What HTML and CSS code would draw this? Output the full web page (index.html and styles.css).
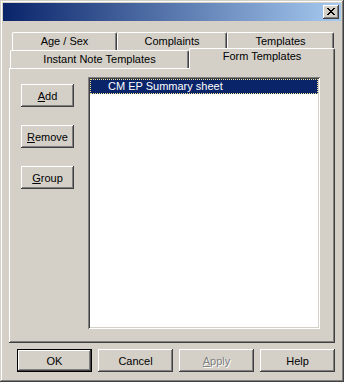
FILE: index.html
```html
<!DOCTYPE html>
<html>
<head>
<meta charset="utf-8">
<link rel="stylesheet" href="styles.css">
</head>
<body>
<div class="window">
  <div class="titlebar">
    <div class="close">
      <svg width="8" height="7" viewBox="0 0 8 7" shape-rendering="crispEdges">
        <g fill="#000">
          <rect x="0" y="0" width="2" height="1"/><rect x="6" y="0" width="2" height="1"/>
          <rect x="1" y="1" width="2" height="1"/><rect x="5" y="1" width="2" height="1"/>
          <rect x="2" y="2" width="4" height="1"/>
          <rect x="3" y="3" width="2" height="1"/>
          <rect x="2" y="4" width="4" height="1"/>
          <rect x="1" y="5" width="2" height="1"/><rect x="5" y="5" width="2" height="1"/>
          <rect x="0" y="6" width="2" height="1"/><rect x="6" y="6" width="2" height="1"/>
        </g>
      </svg>
    </div>
  </div>
  <div class="body">
    <div class="tabstrip">
      <div class="tabrow row1">
        <div class="tab t-age">Age / Sex</div>
        <div class="tab t-comp">Complaints</div>
        <div class="tab t-tmpl">Templates</div>
      </div>
      <div class="tabrow row2">
        <div class="tab t-inst">Instant Note Templates</div>
        <div class="tab t-form active">Form Templates</div>
      </div>
    </div>
    <div class="panel">
      <div class="side">
        <button class="btn small"><u>A</u>dd</button>
        <button class="btn small"><u>R</u>emove</button>
        <button class="btn small"><u>G</u>roup</button>
      </div>
      <div class="list">
        <div class="item selected">CM EP Summary sheet</div>
      </div>
    </div>
    <div class="actions">
      <button class="btn wide default">OK</button>
      <button class="btn wide">Cancel</button>
      <button class="btn wide disabled"><u>A</u>pply</button>
      <button class="btn wide">Help</button>
    </div>
  </div>
</div>
</body>
</html>
```
FILE: styles.css
```css
html, body {
  margin: 0;
  padding: 0;
  background: #d4d0c8;
}
body {
  font-family: "Liberation Sans", Arial, sans-serif;
  font-size: 11px;
  color: #000;
}
.window {
  width: 344px;
  height: 382px;
  box-sizing: border-box;
  padding: 3px;
  background: #d4d0c8;
  box-shadow: inset -1px -1px #404040, inset 1px 1px #d4d0c8, inset -2px -2px #808080, inset 2px 2px #fff;
  display: flex;
  flex-direction: column;
}
.titlebar {
  height: 18px;
  background: linear-gradient(to right, #0a246a, #a6caf0);
  display: flex;
  justify-content: flex-end;
  align-items: center;
  padding-right: 2px;
}
.close {
  width: 16px;
  height: 14px;
  box-sizing: border-box;
  background: #d4d0c8;
  box-shadow: inset -1px -1px #404040, inset 1px 1px #fff, inset -2px -2px #808080, inset 2px 2px #d4d0c8;
  display: flex;
  align-items: center;
  justify-content: center;
  padding: 0 1px 1px 0;
}
.close svg { display: block; }
.body {
  flex: 1;
  display: flex;
  flex-direction: column;
  padding: 0 6px;
}
.tabstrip {
  margin-top: 11px;
  display: flex;
  flex-direction: column;
}
.tabrow {
  display: flex;
  height: 18px;
  align-items: flex-end;
}
.row1 { margin-left: 3px; }
.row2 { margin-left: 1px; }
.tab {
  height: 18px;
  box-sizing: border-box;
  border-top: 1px solid #fff;
  border-left: 1px solid #fff;
  border-right: 1px solid #404040;
  box-shadow: inset -1px 0 #808080;
  border-top-left-radius: 2px;
  border-top-right-radius: 2px;
  background: #d4d0c8;
  text-align: center;
  line-height: 16px;
  white-space: nowrap;
}
.t-age { width: 105px; }
.t-comp { width: 110px; }
.t-tmpl { width: 107px; }
.t-inst { width: 179px; }
.t-form { width: 146px; }
.tab.active {
  height: 21px;
  margin-bottom: -1px;
  position: relative;
  z-index: 1;
  line-height: 15px;
}
.panel {
  width: 326px;
  height: 275px;
  box-sizing: border-box;
  background: #d4d0c8;
  box-shadow: inset -1px -1px #404040, inset 1px 1px #fff, inset -2px -2px #808080, inset 2px 2px #d4d0c8;
  display: flex;
  padding: 9px 15px 14px 12px;
}
.side {
  display: flex;
  flex-direction: column;
  gap: 18px;
  margin-top: 7px;
  width: 53px;
}
.btn {
  background: #d4d0c8;
  border: none;
  padding: 0;
  margin: 0;
  font-family: "Liberation Sans", Arial, sans-serif;
  font-size: 11px;
  color: #000;
  height: 23px;
  box-sizing: border-box;
  box-shadow: inset -1px -1px #404040, inset 1px 1px #fff, inset -2px -2px #808080, inset 2px 2px #d4d0c8;
}
.btn.small { width: 53px; }
.btn.wide { width: 75px; }
.btn.default {
  box-shadow: inset 0 0 0 1px #000, inset -2px -2px #404040, inset 2px 2px #fff, inset -3px -3px #808080, inset 3px 3px #d4d0c8;
}
.btn.disabled {
  color: #808080;
  text-shadow: 1px 1px #fff;
}
.list {
  margin-left: 14px;
  flex: 1;
  box-sizing: border-box;
  background: #fff;
  box-shadow: inset 1px 1px #808080, inset -1px -1px #fff, inset 2px 2px #404040, inset -2px -2px #d4d0c8;
  padding: 2px;
}
.item {
  height: 15px;
  line-height: 14px;
  padding-left: 18px;
  white-space: nowrap;
}
.item.selected {
  background: #0a246a;
  color: #fff;
  outline: 1px dotted #f4e08c;
  outline-offset: -1px;
}
.actions {
  margin-top: 6px;
  display: flex;
  gap: 6px;
  justify-content: flex-end;
}
```
